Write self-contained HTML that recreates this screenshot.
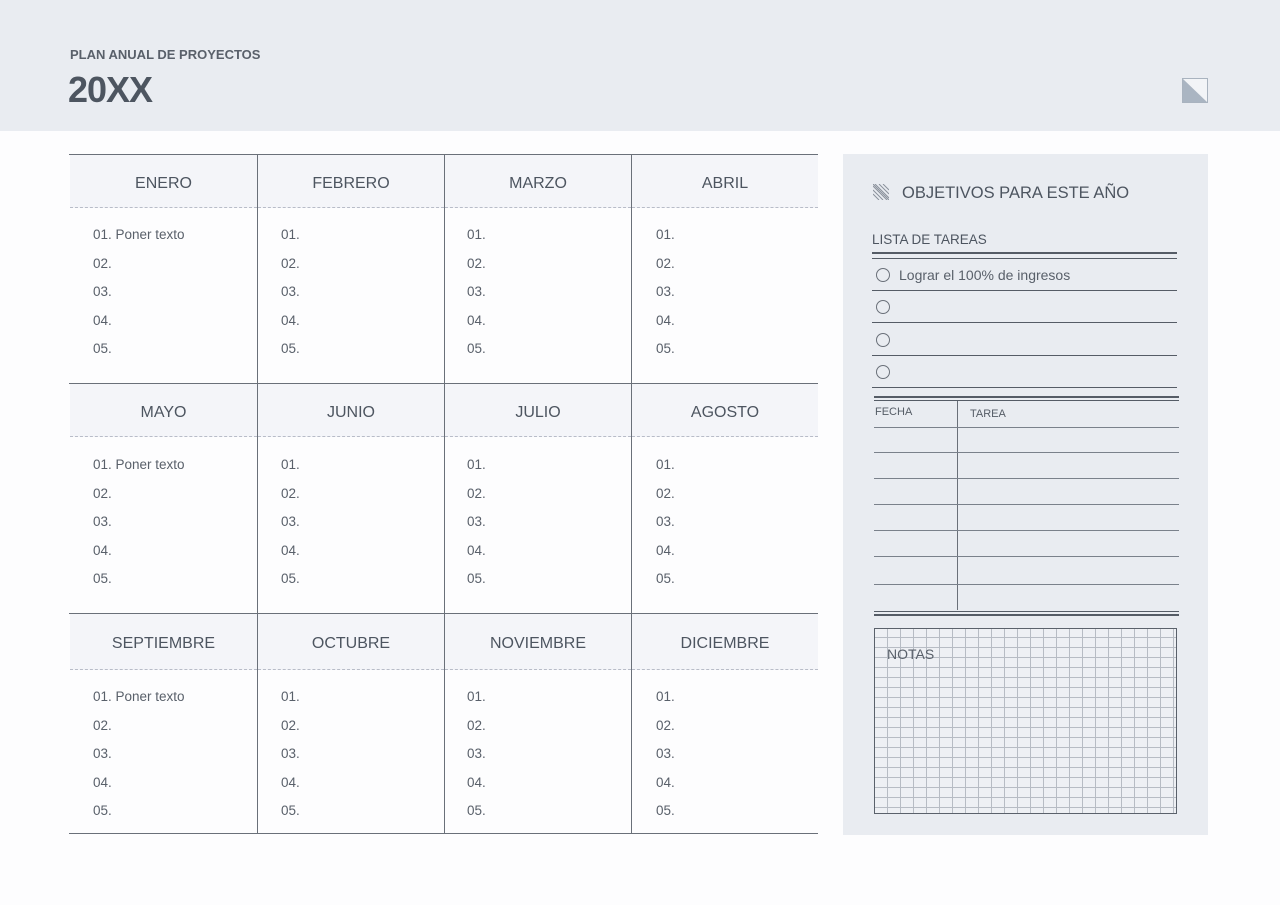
<!DOCTYPE html>
<html><head><meta charset="utf-8"><style>
*{margin:0;padding:0;box-sizing:border-box}
body{width:1280px;height:905px;background:#fdfdfe;font-family:"Liberation Sans",sans-serif;color:#4d5560;position:relative;overflow:hidden}
.a{position:absolute}
.hdr{left:0;top:0;width:1280px;height:131px;background:#e9ecf1}
.mh{position:absolute;background:#f4f5f9;border-bottom:1px dashed #b8bcc8;text-align:center;font-size:16px;color:#4d5560}
.it{position:absolute;font-size:13.5px;color:#59606a;line-height:28.5px}
.hl{position:absolute;height:1px;background:#6a7079}
.vl{position:absolute;width:1px;background:#6a7079}
.sl{position:absolute;height:1px;background:#555c66;left:872px;width:305px}
.circ{position:absolute;left:876px;width:14px;height:14px;border:1px solid #6a7079;border-radius:50%}
</style></head><body>
<div class="a hdr"></div>
<div class="a" style="left:70px;top:47px;font-size:13px;font-weight:bold;color:#59606a">PLAN ANUAL DE PROYECTOS</div>
<div class="a" style="left:68px;top:69px;font-size:36px;font-weight:bold;color:#4d5560;letter-spacing:-1px">20XX</div>
<svg class="a" style="left:1182px;top:78px" width="26" height="25"><rect x="0.5" y="0.5" width="25" height="24" fill="#f2f4f7" stroke="#a9b3bf"/><polygon points="1,1 25,24 1,24" fill="#aab5c2"/></svg>

<div id="tbl"></div>

<div class="a" style="left:843px;top:154px;width:365px;height:681px;background:#e9ecf1"></div>
<svg class="a" style="left:873px;top:184px" width="16" height="16"><g stroke="#8a919b" stroke-width="1"><line x1="0" y1="2" x2="14" y2="16"/><line x1="0" y1="6" x2="10" y2="16"/><line x1="0" y1="10" x2="6" y2="16"/><line x1="2" y1="0" x2="16" y2="14"/><line x1="6" y1="0" x2="16" y2="10"/><line x1="10" y1="0" x2="16" y2="6"/><line x1="0" y1="0" x2="16" y2="16"/></g></svg>
<div class="a" style="left:902px;top:184px;font-size:16.5px;color:#4d5560">OBJETIVOS PARA ESTE AÑO</div>
<div class="a" style="left:872px;top:232px;font-size:13.5px;color:#4d5560">LISTA DE TAREAS</div>
<div class="sl" style="top:252px;height:2px"></div>
<div class="sl" style="top:258px"></div>
<div class="circ" style="top:268px"></div>
<div class="a" style="left:899px;top:267px;font-size:14px;color:#59606a">Lograr el 100% de ingresos</div>
<div class="sl" style="top:290px"></div>
<div class="circ" style="top:300px"></div>
<div class="sl" style="top:322px"></div>
<div class="circ" style="top:333px"></div>
<div class="sl" style="top:355px"></div>
<div class="circ" style="top:365px"></div>
<div class="sl" style="top:387px"></div>
<div class="a" style="left:874px;top:396px;width:305px;height:2px;background:#555c66"></div>
<div class="a" style="left:874px;top:400px;width:305px;height:1px;background:#555c66"></div>
<div class="a" style="left:875px;top:406px;font-size:11px;color:#555c66">FECHA</div>
<div class="a" style="left:970px;top:408px;font-size:11px;color:#555c66">TAREA</div>
<div class="vl" style="left:957px;top:401px;height:209px"></div>
<div id="tl"></div>
<div class="a" style="left:874px;top:611px;width:305px;height:1px;background:#555c66"></div>
<div class="a" style="left:874px;top:614px;width:305px;height:2px;background:#555c66"></div>
<div class="a" style="left:874px;top:628px;width:303px;height:186px;border:1px solid #5a616b;background-color:#eef0f4;background-image:linear-gradient(to right,#b7bcc4 1px,transparent 1px),linear-gradient(to bottom,#b7bcc4 1px,transparent 1px);background-size:13px 10px;background-position:12px 8px"></div>
<div class="a" style="left:887px;top:646px;font-size:14px;color:#59606a">NOTAS</div>

<script>
var m=[["ENERO","FEBRERO","MARZO","ABRIL"],["MAYO","JUNIO","JULIO","AGOSTO"],["SEPTIEMBRE","OCTUBRE","NOVIEMBRE","DICIEMBRE"]];
var xs=[69,257,444,631,818];
var rows=[[154,207,221],[383,436,451],[613,669,683]];
var tx=[93,281,467,656];
var h='';
rows.forEach(function(r,i){
 h+='<div class="hl" style="left:69px;width:749px;top:'+r[0]+'px"></div>';
 for(var c=0;c<4;c++){
  h+='<div class="mh" style="left:'+(xs[c]+1)+'px;width:'+(xs[c+1]-xs[c]-1)+'px;top:'+(r[0]+1)+'px;height:'+(r[1]-r[0])+'px;line-height:'+(r[1]-r[0]+4)+'px">'+m[i][c]+'</div>';
  var t='';for(var k=1;k<=5;k++)t+='0'+k+'.'+(c==0&&k==1?' Poner texto':'')+'<br>';
  h+='<div class="it" style="left:'+tx[c]+'px;top:'+r[2]+'px">'+t+'</div>';
 }
});
h+='<div class="hl" style="left:69px;width:749px;top:833px"></div>';
for(var c=1;c<4;c++)h+='<div class="vl" style="left:'+xs[c]+'px;top:154px;height:679px"></div>';
document.getElementById('tbl').innerHTML=h;
var g='';[427,452,478,504,530,556,584].forEach(function(y){g+='<div class="a" style="left:874px;width:305px;height:1px;background:#7a818b;top:'+y+'px"></div>';});
document.getElementById('tl').innerHTML=g;
</script>
</body></html>
